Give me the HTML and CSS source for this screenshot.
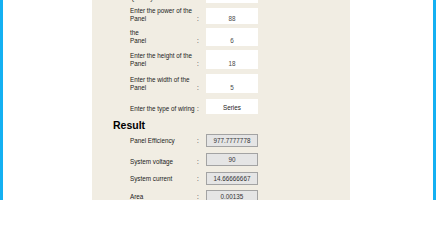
FILE: index.html
```html
<!DOCTYPE html>
<html>
<head>
<meta charset="utf-8">
<title>Solar Panel Calculator</title>
<link rel="stylesheet" href="styles.css">
</head>
<body>
<div class="page">
  <div class="edge"></div>
  <main class="panel">
    <form class="form">
      <div class="row row-q"><span class="label">Quantity</span><span class="colon">:</span><span class="field">15</span></div>
      <div class="row row-p"><span class="label">Enter the power of the<br>Panel</span><span class="colon">:</span><span class="field">88</span></div>
      <div class="row row-t"><span class="label">the<br>Panel</span><span class="colon">:</span><span class="field">6</span></div>
      <div class="row row-h"><span class="label">Enter the height of the<br>Panel</span><span class="colon">:</span><span class="field">18</span></div>
      <div class="row row-w"><span class="label">Enter the width of the<br>Panel</span><span class="colon">:</span><span class="field">5</span></div>
      <div class="row row-s"><span class="label">Enter the type of wiring</span><span class="colon">:</span><span class="field field-dark">Series</span></div>
    </form>
    <h2 class="result-title">Result</h2>
    <div class="results">
      <div class="out-row"><span class="label">Panel Efficiency</span><span class="colon">:</span><span class="output">977.7777778</span></div>
      <div class="out-row out-sv"><span class="label">System voltage</span><span class="colon">:</span><span class="output">90</span></div>
      <div class="out-row out-sc"><span class="label">System current</span><span class="colon">:</span><span class="output">14.66666667</span></div>
      <div class="out-row out-area"><span class="label">Area</span><span class="colon">:</span><span class="output">0.00135</span></div>
    </div>
  </main>
  <div class="edge edge-right"></div>
</div>
</body>
</html>
```
FILE: styles.css
```css
html, body {
  margin: 0;
  padding: 0;
  background: #ffffff;
}

body {
  font-family: "Liberation Sans", Arial, sans-serif;
  font-size: 6.3px;
  color: #1a1a1a;
}

.page {
  display: flex;
  width: 436px;
  height: 200px;
  overflow: hidden;
}

.edge {
  width: 3px;
  flex: none;
  background: #14b0f2;
}

.edge-right {
  margin-left: auto;
}

.panel {
  flex: none;
  width: 258px;
  margin-left: 89px;
  background: #f1ede3;
}

.form {
  margin: -13px 0 0 0;
  padding-left: 38px;
  display: flex;
  flex-direction: column;
  gap: 4px;
}

.row {
  display: grid;
  grid-template-columns: 64px 12px 52px;
  align-items: end;
  line-height: 8px;
}

.label {
  white-space: nowrap;
  padding-bottom: 1px;
}

.colon {
  padding-left: 3px;
  padding-bottom: 1px;
}

.field {
  display: flex;
  align-items: flex-end;
  justify-content: center;
  box-sizing: border-box;
  padding-bottom: 1px;
  background: #ffffff;
  color: #4a4a4a;
}

.field-dark {
  color: #222222;
  padding-bottom: 2px;
}

.row-q .field { height: 16px; }
.row-p .field { height: 16px; }
.row-t .field { height: 18px; }
.row-h .field { height: 19px; }
.row-w { margin-top: 1px; }
.row-w .field { height: 19px; }
.row-s { margin-top: 2px; }
.row-s .field { height: 15px; }

.result-title {
  margin: 5px 0 3px 21px;
  font-size: 10.5px;
  line-height: 12px;
  font-weight: bold;
  color: #000000;
}

.results {
  padding-left: 38px;
  display: flex;
  flex-direction: column;
  gap: 6px;
}

.out-row {
  display: grid;
  grid-template-columns: 64px 12px 52px;
  align-items: center;
  line-height: 8px;
}

.out-row .label,
.out-row .colon {
  padding-bottom: 0;
  padding-top: 1px;
}

.out-sv .label,
.out-sv .colon {
  padding-top: 5px;
}

.out-area {
  margin-top: -1px;
}

.output {
  height: 13px;
  box-sizing: border-box;
  border: 1px solid #a3a3a3;
  background: #e5e5e5;
  text-align: center;
  line-height: 11px;
  color: #333333;
}
```
